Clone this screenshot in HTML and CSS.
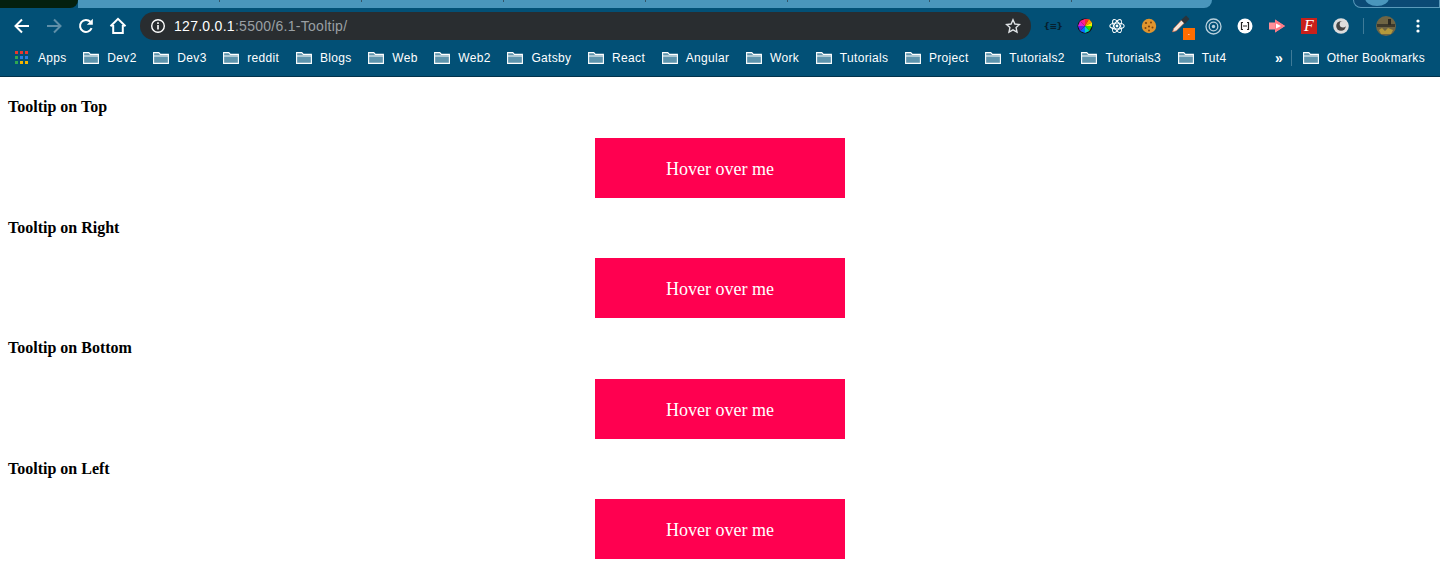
FILE: index.html
```html
<!DOCTYPE html>
<html lang="en">
<head>
  <meta charset="UTF-8" />
  <title>Tooltip</title>
  <link rel="stylesheet" href="styles.css">
</head>
<body>
  <svg class="defs" width="0" height="0">
    <symbol id="folder" viewBox="0 0 16 16">
      <path d="M0.6 13.4V2.6h5.2l1.6 1.8h8v9z" fill="#5d94ad" stroke="#fff" stroke-width="1.1"/>
      <path d="M0.6 6h14.8" stroke="#fff" stroke-width="1"/>
    </symbol>
  </svg>

  <header class="browser">
    <div class="tabstrip">
      <div class="tab-dark"></div>
      <div class="tab"></div>
      <div class="tab"></div>
      <div class="tab"></div>
      <div class="tab"></div>
      <div class="tab"></div>
      <div class="tab"></div>
      <div class="tab"></div>
      <div class="tab tab-last"></div>
      <div class="tab-gap"></div>
      <div class="wallpaper"><span class="wallpaper-dot"></span></div>
    </div>

    <div class="toolbar">
      <div class="navbtn">
        <svg width="18" height="18" viewBox="0 0 18 18"><path d="M16 9H3M9 2.5L2.500 9 9 15.500" fill="none" stroke="#fff" stroke-width="2"/></svg>
      </div>
      <div class="navbtn">
        <svg width="18" height="18" viewBox="0 0 18 18"><path d="M2 9h13M9 2.5L15.500 9 9 15.500" fill="none" stroke="#5f8fa8" stroke-width="2"/></svg>
      </div>
      <div class="navbtn">
        <svg width="18" height="18" viewBox="0 0 18 18"><path d="M14.600 11.200A6 6 0 1 1 13.400 4.800" fill="none" stroke="#fff" stroke-width="2"/><path d="M15.800 1.800v6h-6z" fill="#fff"/></svg>
      </div>
      <div class="navbtn">
        <svg width="18" height="18" viewBox="0 0 18 18"><path d="M1.500 9.200L9 1.800l7.500 7.400M4.200 8v8h9.600V8" fill="none" stroke="#fff" stroke-width="2"/></svg>
      </div>

      <div class="omnibox">
        <svg class="info" width="16" height="16" viewBox="0 0 16 16"><circle cx="8" cy="8" r="6.300" fill="none" stroke="#fff" stroke-width="1.400"/><path d="M7.200 7h1.600v4.600H7.200zM7.200 4.300h1.600v1.600H7.200z" fill="#fff"/></svg>
        <span class="host">127.0.0.1</span><span class="path">:5500/6.1-Tooltip/</span>
        <svg class="star" width="16" height="16" viewBox="0 0 16 16"><path d="M8 1.800l1.900 4.200 4.600.5-3.400 3.100.9 4.500L8 11.800l-4 2.300.9-4.500-3.400-3.100 4.600-.5z" fill="none" stroke="#dfe3e6" stroke-width="1.400"/></svg>
      </div>

      <div class="ext"><span class="ext-braces">{≡}</span></div>
      <div class="ext">
        <svg width="16" height="16" viewBox="0 0 16 16">
          <circle cx="8" cy="8" r="7.500" fill="#111"/>
          <path d="M8 8V1h4z" fill="#ff2a2a"/>
          <path d="M8 8l4-7 3 3.500z" fill="#ff9a00"/>
          <path d="M8 8l7-3.500v4z" fill="#f5ee00"/>
          <path d="M8 8h7l-2.500 5z" fill="#34d800"/>
          <path d="M8 8l4.500 5-4.500 2z" fill="#00d9c0"/>
          <path d="M8 8v7l-5-2z" fill="#0a6cff"/>
          <path d="M8 8l-5 5-2-5z" fill="#5a24e8"/>
          <path d="M8 8H1l2-5z" fill="#e020d0"/>
          <path d="M8 8L3 3l5-2z" fill="#ff2090"/>
        </svg>
      </div>
      <div class="ext">
        <svg width="16" height="16" viewBox="0 0 16 16" fill="none" stroke="#fff" stroke-width="1.100">
          <ellipse cx="8" cy="8" rx="7.200" ry="3"/>
          <ellipse cx="8" cy="8" rx="7.200" ry="3" transform="rotate(60 8 8)"/>
          <ellipse cx="8" cy="8" rx="7.200" ry="3" transform="rotate(120 8 8)"/>
          <circle cx="8" cy="8" r="1.400" fill="#fff" stroke="none"/>
        </svg>
      </div>
      <div class="ext">
        <svg width="16" height="16" viewBox="0 0 16 16">
          <circle cx="8" cy="8" r="7.200" fill="#e0952e"/>
          <circle cx="5" cy="5" r="1.100" fill="#7a4310"/>
          <circle cx="10" cy="4.500" r="1" fill="#7a4310"/>
          <circle cx="8" cy="8.500" r="1.100" fill="#7a4310"/>
          <circle cx="4.500" cy="10" r="1" fill="#7a4310"/>
          <circle cx="11.500" cy="9.500" r="1" fill="#7a4310"/>
          <circle cx="8" cy="12.500" r="1" fill="#7a4310"/>
        </svg>
      </div>
      <div class="ext ext-badged">
        <svg class="dropper" width="18" height="18" viewBox="0 0 16 16">
          <path d="M0.500 15l1-3 7-7.500 2.500 2.500-7 7z" fill="#f3e6dc" stroke="#d9653a" stroke-width="0.600"/>
          <path d="M8 4.500L12.500 0.500 15.500 3.500 11.500 8z" fill="#2b343b"/>
        </svg>
        <span class="badge">.</span>
      </div>
      <div class="ext">
        <svg width="17" height="17" viewBox="0 0 17 17" fill="none" stroke="#b9d0dc">
          <circle cx="8.500" cy="8.500" r="7.500" stroke-width="1.300"/>
          <circle cx="8.500" cy="8.500" r="4.300" stroke-width="1.300"/>
          <circle cx="8.500" cy="8.500" r="1.700" fill="#b9d0dc" stroke="none"/>
        </svg>
      </div>
      <div class="ext">
        <svg width="16" height="16" viewBox="0 0 16 16">
          <circle cx="8" cy="8" r="7.500" fill="#fff"/>
          <path d="M6 4.500H4.500v7H6M10 4.500h1.500v7H10M6 8h4" fill="none" stroke="#222" stroke-width="1.200"/>
        </svg>
      </div>
      <div class="ext">
        <svg width="18" height="14" viewBox="0 0 18 14">
          <path d="M1 3.500h6V0.500L17 7 7 13.500v-3H1z" fill="#ff8f98"/>
          <path d="M7 3.500V0.500L17 7 7 13.500z" fill="#ff7a85"/>
          <path d="M8 4.500L13 7 8 9.500z" fill="#fff"/>
        </svg>
      </div>
      <div class="ext"><span class="ext-f">F</span></div>
      <div class="ext">
        <svg width="16" height="16" viewBox="0 0 16 16">
          <circle cx="8" cy="8" r="7.800" fill="#ddd"/>
          <circle cx="8" cy="8" r="4.800" fill="#444"/>
          <circle cx="10" cy="6.300" r="3.300" fill="#ddd"/>
        </svg>
      </div>
      <div class="toolbar-sep"></div>
      <div class="navbtn">
        <svg width="20" height="20" viewBox="0 0 20 20">
          <circle cx="10" cy="10" r="10" fill="#6f6544"/>
          <path d="M1 8h18v3H1z" fill="#3d3a2c"/>
          <path d="M3 14l3-2 3 3 3-3 5 2-2 4H5z" fill="#b49a3c"/>
          <path d="M12 3h3v6h-3z" fill="#2c2a22"/>
        </svg>
      </div>
      <div class="navbtn">
        <svg width="4" height="14" viewBox="0 0 4 14" fill="#fff"><circle cx="2" cy="2" r="1.600"/><circle cx="2" cy="7" r="1.600"/><circle cx="2" cy="12" r="1.600"/></svg>
      </div>
    </div>

    <nav class="bookmarks">
      <a class="bm">
        <svg class="apps" width="13" height="13" viewBox="0 0 13 13">
          <path d="M0 0h3v3H0z" fill="#e8372c"/><path d="M5 0h3v3H5z" fill="#e8372c"/><path d="M10 0h3v3h-3z" fill="#e8372c"/>
          <path d="M0 5h3v3H0z" fill="#2fa84f"/><path d="M5 5h3v3H5z" fill="#2a7de1"/><path d="M10 5h3v3h-3z" fill="#2a7de1"/>
          <path d="M0 10h3v3H0z" fill="#2fa84f"/><path d="M5 10h3v3H5z" fill="#f5b400"/><path d="M10 10h3v3h-3z" fill="#f5b400"/>
        </svg>
        Apps
      </a>
      <a class="bm"><svg width="16" height="16"><use href="#folder"/></svg>Dev2</a>
      <a class="bm"><svg width="16" height="16"><use href="#folder"/></svg>Dev3</a>
      <a class="bm"><svg width="16" height="16"><use href="#folder"/></svg>reddit</a>
      <a class="bm"><svg width="16" height="16"><use href="#folder"/></svg>Blogs</a>
      <a class="bm"><svg width="16" height="16"><use href="#folder"/></svg>Web</a>
      <a class="bm"><svg width="16" height="16"><use href="#folder"/></svg>Web2</a>
      <a class="bm"><svg width="16" height="16"><use href="#folder"/></svg>Gatsby</a>
      <a class="bm"><svg width="16" height="16"><use href="#folder"/></svg>React</a>
      <a class="bm"><svg width="16" height="16"><use href="#folder"/></svg>Angular</a>
      <a class="bm"><svg width="16" height="16"><use href="#folder"/></svg>Work</a>
      <a class="bm"><svg width="16" height="16"><use href="#folder"/></svg>Tutorials</a>
      <a class="bm"><svg width="16" height="16"><use href="#folder"/></svg>Project</a>
      <a class="bm"><svg width="16" height="16"><use href="#folder"/></svg>Tutorials2</a>
      <a class="bm"><svg width="16" height="16"><use href="#folder"/></svg>Tutorials3</a>
      <a class="bm"><svg width="16" height="16"><use href="#folder"/></svg>Tut4</a>
      <div class="bm-end">
        <span class="chevrons">»</span>
        <span class="bm-sep"></span>
        <a class="bm"><svg width="16" height="16"><use href="#folder"/></svg>Other Bookmarks</a>
      </div>
    </nav>
  </header>

  <main class="content">
    <h4>Tooltip on Top</h4>
    <div class="tooltip-btn">Hover over me</div>
    <h4>Tooltip on Right</h4>
    <div class="tooltip-btn">Hover over me</div>
    <h4>Tooltip on Bottom</h4>
    <div class="tooltip-btn">Hover over me</div>
    <h4>Tooltip on Left</h4>
    <div class="tooltip-btn">Hover over me</div>
  </main>
</body>
</html>
```

FILE: styles.css
```css
* {
  box-sizing: border-box;
}

body {
  margin: 0;
  background: #fff;
  color: #000;
  font-family: "Liberation Serif", serif;
  font-size: 16px;
}

.defs {
  position: absolute;
}

.browser {
  background: #025076;
  border-bottom: 1px solid #01324b;
  font-family: "Liberation Sans", sans-serif;
}

/* tab strip, only its bottom edge is in frame */
.tabstrip {
  display: flex;
  height: 8px;
}

.tab-dark {
  width: 78px;
  background: #04200f;
  border-bottom-right-radius: 8px;
}

.tab {
  width: 142px;
  background: #4a96bc;
  position: relative;
}

.tab::after {
  content: "";
  position: absolute;
  right: 0;
  top: 0;
  width: 1px;
  height: 2px;
  background: #33566a;
}

.tab-last {
  width: 140px;
  border-bottom-right-radius: 8px;
}

.tab-last::after {
  display: none;
}

.tab-gap {
  width: 141px;
}

.wallpaper {
  flex: 1;
  background: #0b4a75;
  border: 1px solid #5b9abb;
  border-top: none;
  border-bottom-left-radius: 8px;
  position: relative;
  overflow: hidden;
}

.wallpaper-dot {
  position: absolute;
  left: 11px;
  top: -10px;
  width: 24px;
  height: 16px;
  border-radius: 50%;
  background: #4a96bc;
}

.toolbar {
  display: flex;
  align-items: center;
  height: 35px;
  padding: 4px 6px 3px;
}

.navbtn,
.ext {
  width: 32px;
  height: 28px;
  display: flex;
  align-items: center;
  justify-content: center;
  flex-shrink: 0;
}

.omnibox {
  flex: 1;
  height: 28px;
  margin: 0 6px;
  padding: 0 10px;
  display: flex;
  align-items: center;
  border-radius: 14px;
  background: #292d30;
  font-size: 14px;
  letter-spacing: 0.28px;
}

.info {
  margin-right: 8px;
}

.host {
  color: #fff;
}

.path {
  color: #9aa0a4;
}

.star {
  margin-left: auto;
}

.ext-badged {
  position: relative;
}

.dropper {
  margin-top: -4px;
}

.badge {
  position: absolute;
  left: 18px;
  top: 16px;
  width: 12px;
  height: 12px;
  background: #ff6d00;
  color: #fff;
  font-size: 9px;
  line-height: 8px;
  text-align: center;
}

.ext-braces {
  font-family: "DejaVu Sans", sans-serif;
  font-size: 9px;
  font-weight: bold;
  letter-spacing: -0.5px;
  color: #06202e;
}

.ext-f {
  width: 16px;
  height: 16px;
  background: #c9201a;
  color: #fff;
  font-family: "Liberation Serif", serif;
  font-style: italic;
  font-size: 16px;
  line-height: 16px;
  text-align: center;
}

.toolbar-sep {
  width: 1px;
  height: 16px;
  margin: 0 6px;
  background: #3f7b98;
}

.bookmarks {
  display: flex;
  align-items: center;
  gap: 16.65px;
  height: 33px;
  padding: 0 15px 4px;
}

.bm {
  display: flex;
  align-items: center;
  gap: 8px;
  color: #fff;
  font-size: 12px;
  letter-spacing: 0.33px;
  white-space: nowrap;
}

.apps {
  margin-right: 2px;
}

.bm-end {
  display: flex;
  align-items: center;
  margin-left: auto;
}

.chevrons {
  color: #fff;
  font-size: 14px;
  font-weight: bold;
  margin-right: 8px;
}

.bm-sep {
  width: 1px;
  height: 16px;
  margin-right: 11px;
  background: #3f7b98;
}

.content {
  padding: 0 8px;
  overflow: hidden;
}

h4 {
  margin: 21.28px 0;
  font-size: 16px;
  line-height: 18px;
}

.tooltip-btn {
  width: 250px;
  height: 60px;
  margin: 0 auto;
  padding-top: 2px;
  display: flex;
  align-items: center;
  justify-content: center;
  background: #ff0050;
  color: #fff;
  font-size: 18px;
  line-height: 20px;
}
```
